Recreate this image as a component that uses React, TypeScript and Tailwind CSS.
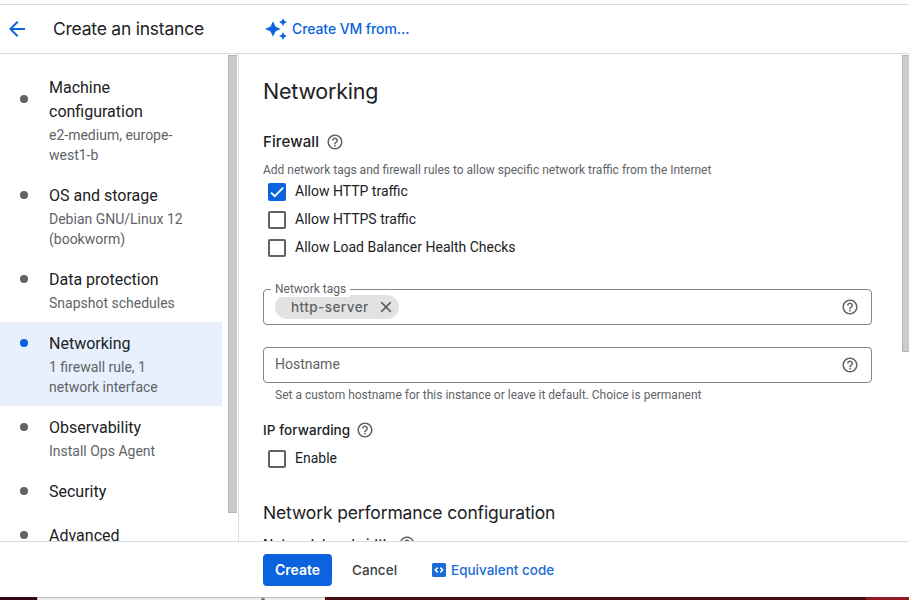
import React from "react";
import { MdArrowBack, MdHelpOutline } from "react-icons/md";

const display = "font-['Inter','Open_Sans',sans-serif]";

type Step = { title: string; sub?: string; tall?: boolean; active?: boolean };

const steps: Step[] = [
  { title: "Machine configuration", sub: "e2-medium, europe-west1-b", tall: true },
  { title: "OS and storage", sub: "Debian GNU/Linux 12 (bookworm)" },
  { title: "Data protection", sub: "Snapshot schedules" },
  { title: "Networking", sub: "1 firewall rule, 1 network interface", active: true },
  { title: "Observability", sub: "Install Ops Agent" },
  { title: "Security" },
  { title: "Advanced" },
];

function Help() {
  return <MdHelpOutline size={18} className="shrink-0 text-[#5f6368]" />;
}

function StepItem({ title, sub, tall, active }: Step) {
  return (
    <li className={`flex w-[222px] pt-[10px] pl-5 ${sub ? "pb-[9px]" : "pb-[10px]"} ${active ? "bg-[#e8f0fe]" : ""}`}>
      <span
        className={`size-2 shrink-0 rounded-full ${tall ? "mt-[19px]" : "mt-[7px]"} ${active ? "bg-[#0b64dd]" : "bg-[#5f6368]"}`}
      />
      <div className="ml-[21px] w-[140px]">
        <div className="text-base leading-6 text-[#202124]">{title}</div>
        {sub && <div className="mt-px text-sm leading-5 text-[#5f6368]">{sub}</div>}
      </div>
    </li>
  );
}

function Check({ label, checked }: { label: string; checked?: boolean }) {
  return (
    <label className="flex h-7 items-center pl-[5px]">
      <span
        className={`mt-[2px] flex size-[18px] items-center justify-center rounded-[2px] ${checked ? "bg-[#0b64dd]" : "border-2 border-[#5f6368]"}`}
      >
        {checked && (
          <svg viewBox="0 0 24 24" className="size-[18px]" fill="none" stroke="#fff" strokeWidth="2.4">
            <path d="M4.1 12.7 9 17.6 20.3 6.3" />
          </svg>
        )}
      </span>
      <span className="ml-[9px] text-sm leading-5 text-[#202124]">{label}</span>
    </label>
  );
}

export default function App() {
  return (
    <div className="flex h-[600px] w-[909px] flex-col overflow-hidden bg-white pt-1 font-['Roboto',sans-serif]">
      <header className={`flex h-[50px] shrink-0 items-center border-y border-[#dadce0] pl-[5px] ${display}`}>
        <MdArrowBack size={24} className="text-[#0b64dd]" />
        <h1 className="ml-6 w-[211px] text-[17.5px] leading-6 tracking-[-0.23px] text-[#202124]">Create an instance</h1>
        <button className="flex items-center text-sm font-medium text-[#0b64dd]">
          <svg viewBox="0 0 24 24" className="size-6" fill="currentColor">
            <path d="M9 4.2 11.4 9.6 16.6 12 11.4 14.4 9 19.8 6.6 14.4 1 12 6.6 9.6Z" />
            <path d="M19 1.2 20.3 3.8 22.9 5.1 20.3 6.4 19 9 17.7 6.4 15.1 5.1 17.7 3.8Z" />
            <path d="M19 15.1 20.3 17.7 22.9 19 20.3 20.3 19 22.9 17.7 20.3 15.1 19 17.7 17.7Z" />
          </svg>
          <span className="ml-1 tracking-[-0.09px]">Create VM from...</span>
        </button>
      </header>

      <div className="flex min-h-0 flex-1">
        <aside className="flex w-[239px] shrink-0 overflow-hidden border-r border-[#dadce0]">
          <ul className="w-[228px] shrink-0 pt-3">
            {steps.map((s) => (
              <StepItem key={s.title} {...s} />
            ))}
          </ul>
          <div className="mt-px h-[458px] w-[9px] border border-r-0 border-[#b5b5b5] bg-[#cbcbcb]" />
        </aside>

        <main className="flex min-w-0 flex-1 overflow-hidden">
          <div className="w-[663px] shrink-0 pl-6">
            <h2 className={`mt-[21px] text-[21.5px] leading-8 tracking-[-0.23px] text-[#202124] ${display}`}>
              Networking
            </h2>
            <div className={`mt-[23px] flex h-6 items-center text-[15px] font-medium text-[#202124] ${display}`}>
              <span className="mr-[7px] tracking-[0.12px]">Firewall</span>
              <Help />
            </div>
            <p className="mt-2 mb-[-1px] text-xs leading-4 text-[#5f6368]">
              Add network tags and firewall rules to allow specific network traffic from the Internet
            </p>
            <Check label="Allow HTTP traffic" checked />
            <Check label="Allow HTTPS traffic" />
            <Check label="Allow Load Balancer Health Checks" />

            <div className="relative mt-7 flex h-9 w-[609px] items-center rounded border border-[#80868b] pr-3 pl-[11px]">
              <span className="absolute -top-[9px] left-[7px] bg-white px-1 text-xs leading-4 text-[#5f6368]">
                Network tags
              </span>
              <span
                className={`flex h-6 w-[124px] items-center rounded-full bg-[#e2e2e2] pl-4 text-[13.5px] font-medium text-[#5f6368] ${display}`}
              >
                <span className="w-[86px] tracking-[0.45px] whitespace-nowrap">http-server</span>
                <svg viewBox="0 0 18 18" className="size-[18px]" fill="none" stroke="currentColor" strokeWidth="1.7">
                  <path d="M4.2 4.2 13.8 13.8M13.8 4.2 4.2 13.8" />
                </svg>
              </span>
              <span className="ml-auto">
                <Help />
              </span>
            </div>

            <div className="mt-[22px] flex h-9 w-[609px] items-center justify-between rounded border border-[#80868b] pr-3 pl-[11px]">
              <span className="-mt-0.5 text-sm leading-5 text-[#5f6368]">Hostname</span>
              <Help />
            </div>
            <p className="mt-1 pl-3 text-xs leading-4 text-[#5f6368]">
              Set a custom hostname for this instance or leave it default. Choice is permanent
            </p>

            <div className={`mt-[17px] flex h-5 items-center text-[13.5px] font-medium text-[#202124] ${display}`}>
              <span className="mr-1.5 tracking-[0.08px]">IP forwarding</span>
              <Help />
            </div>
            <div className="mt-1">
              <Check label="Enable" />
            </div>

            <h3 className={`mt-[29px] text-[17.5px] leading-6 tracking-[-0.14px] text-[#202124] ${display}`}>
              Network performance configuration
            </h3>
            <div className={`mt-[9px] flex h-5 items-center text-[13.5px] font-medium text-[#202124] ${display}`}>
              <span className="mr-[7px] tracking-[0.05px]">Network bandwidth</span>
              <Help />
            </div>
          </div>
          <div className="mt-px h-[297px] flex-1 border border-r-0 border-[#b5b5b5] bg-[#cbcbcb]" />
        </main>
      </div>

      <footer
        className={`flex h-14 shrink-0 items-center border-t border-[#dadce0] pl-[263px] text-sm font-medium ${display}`}
      >
        <button className="h-8 w-[69px] rounded bg-[#0b64dd] text-sm font-semibold text-white">Create</button>
        <button className="ml-5 w-[80px] pt-[2px] text-left text-[13.5px] tracking-[0.05px] text-[#3c4043]">Cancel</button>
        <button className="flex items-center text-[#1a6bd8]">
          <svg viewBox="0 0 14 14" className="size-[14px]">
            <rect width="14" height="14" rx="1.5" fill="currentColor" />
            <path d="M5.7 4.6 3.3 7l2.4 2.4M8.3 4.6 10.7 7 8.3 9.4" fill="none" stroke="#fff" strokeWidth="1.5" />
          </svg>
          <span className="ml-[5px] pt-[2px] text-[13.5px]">Equivalent code</span>
        </button>
      </footer>
      <div className="flex h-[3px] shrink-0 bg-[#450c16]">
        <div className="w-[37px] bg-[#350812]" />
        <div className="flex w-[288px] border-t border-l border-[#bdbdbd] bg-[#ededed]">
          <div className="ml-[223px] h-full w-1 rounded-t-full bg-[#6b6470]" />
        </div>
        <div className="ml-auto w-[43px] bg-[#8c1a22]" />
      </div>
    </div>
  );
}
